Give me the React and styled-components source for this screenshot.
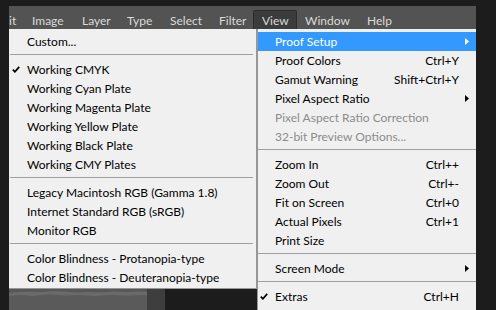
import React from "react";
import styled, { createGlobalStyle } from "styled-components";

const GlobalStyle = createGlobalStyle`
  html, body { margin: 0; padding: 0; background: #1c1c1c; }
  body { font-family: Lato, "Open Sans", sans-serif; font-size: 12px; }
  #root { width: 496px; height: 310px; overflow: hidden; }
`;

const Screen = styled.div`
  width: 496px;
  height: 310px;
  overflow: hidden;
  background: #1c1c1c;
  padding: 6px 0 0 9px;
  box-sizing: border-box;
  display: flex;
  flex-direction: column;
`;

const Column = styled.div`
  width: 467px;
  flex: 1;
  display: flex;
  flex-direction: column;
  min-height: 0;
`;

const MenuBar = styled.div`
  height: 23px;
  background: #535353;
  display: flex;
  align-items: flex-end;
  flex-shrink: 0;
`;

const BarItem = styled.div`
  width: ${(p) => p.$w}px;
  height: 19px;
  box-sizing: border-box;
  padding-left: ${(p) => (p.$first ? 0 : 8)}px;
  display: flex;
  align-items: center;
  color: #dadada;
  font-size: 12px;
  white-space: nowrap;
  overflow: hidden;
  background: ${(p) => (p.$active ? "#3c3c3c" : "transparent")};
  border: ${(p) => (p.$active ? "1px solid #2c2c2c" : "none")};
  border-bottom: none;
  border-radius: ${(p) => (p.$active ? "2px 2px 0 0" : "0")};
  padding-top: ${(p) => (p.$active ? 0 : 1)}px;
  margin-left: ${(p) => (p.$active ? -1 : 0)}px;
  ${(p) => (p.$active ? "padding-left: 8px; padding-top: 1px;" : "")}
`;

const Body = styled.div`
  flex: 1;
  display: flex;
  min-height: 0;
`;

const LeftArea = styled.div`
  width: 248px;
  display: flex;
  flex-direction: column;
`;

const Menu = styled.div`
  background: #f0f0f0;
  box-sizing: border-box;
  padding: ${(p) => (p.$sub ? "3px 0 1px" : "3px 0 0")};
  display: flex;
  flex-direction: column;
  ${(p) =>
    p.$sub
      ? "border-right: 1px solid #979797; border-bottom: 1px solid #979797;"
      : "border-left: 1px solid #979797; flex: 1;"}
  width: ${(p) => p.$w}px;
`;

const Row = styled.div`
  height: 19px;
  display: flex;
  align-items: center;
  position: relative;
  padding: 0 17px 0 ${(p) => p.$pl}px;
  background: ${(p) => (p.$hot ? "#3399ff" : "transparent")};
  color: ${(p) => (p.$hot ? "#ffffff" : p.$disabled ? "#8c8c8c" : "#000000")};
  white-space: nowrap;
  margin: ${(p) => (p.$hot ? "0 0 0 0" : "0")};
`;

const Label = styled.span`
  flex: 1;
`;

const Shortcut = styled.span`
  text-align: right;
`;

const CheckSlot = styled.span`
  position: absolute;
  left: ${(p) => p.$x}px;
  top: 6px;
  width: 8px;
  height: 7px;
  display: flex;
`;

const ArrowSlot = styled.span`
  position: absolute;
  right: 7px;
  top: 6px;
  width: 4px;
  height: 7px;
  display: flex;
`;

const Separator = styled.div`
  height: 9px;
  box-sizing: border-box;
  padding: 3px ${(p) => p.$r}px 0 ${(p) => p.$l}px;
  &::after {
    content: "";
    display: block;
    height: 1px;
    background: #a0a0a0;
  }
`;

const Canvas = styled.div`
  flex: 1;
  display: flex;
`;

const Check = () => (
  <svg width="8" height="7" viewBox="0 0 8 7">
    <path d="M0.8 3.6 L2.9 5.8 L7.2 0.9" fill="none" stroke="#000" strokeWidth="1.7" />
  </svg>
);

const Arrow = ({ color }) => (
  <svg width="4" height="7" viewBox="0 0 4 7">
    <polygon points="0,0 4,3.5 0,7" fill={color} />
  </svg>
);

const CanvasArt = () => (
  <svg width="248" height="22" viewBox="0 0 248 22">
    <rect x="0" y="0" width="156" height="22" fill="#575757" />
    <path
      d="M0 4 L10 3 L20 2.5 L32 3 L44 2 L56 2.5 L68 3.5 L80 3 L92 3.5 L104 2.5 L116 3 L128 2.5 L140 3 L146 4 L146 22 L0 22 Z"
      fill="#6a6a6a"
    />
    <path
      d="M0 7 L12 6 L24 7 L40 5.5 L56 6.5 L70 6 L86 7 L100 6 L118 6.5 L134 6 L146 7 L146 22 L0 22 Z"
      fill="#5a5a5a"
    />
    <rect x="138" y="0" width="18" height="22" fill="#3e3e3e" />
  </svg>
);

const barItems = [
  { t: "it", w: 15, first: true },
  { t: "Image", w: 50 },
  { t: "Layer", w: 45 },
  { t: "Type", w: 43 },
  { t: "Select", w: 49 },
  { t: "Filter", w: 43 },
  { t: "View", w: 44, active: true },
  { t: "Window", w: 62 },
  { t: "Help", w: 60 },
];

const leftMenu = [
  { t: "Custom..." },
  "sep",
  { t: "Working CMYK", check: true },
  { t: "Working Cyan Plate" },
  { t: "Working Magenta Plate" },
  { t: "Working Yellow Plate" },
  { t: "Working Black Plate" },
  { t: "Working CMY Plates" },
  "sep",
  { t: "Legacy Macintosh RGB (Gamma 1.8)" },
  { t: "Internet Standard RGB (sRGB)" },
  { t: "Monitor RGB" },
  "sep",
  { t: "Color Blindness - Protanopia-type" },
  { t: "Color Blindness - Deuteranopia-type" },
];

const rightMenu = [
  { t: "Proof Setup", hot: true, sub: true },
  { t: "Proof Colors", k: "Ctrl+Y" },
  { t: "Gamut Warning", k: "Shift+Ctrl+Y" },
  { t: "Pixel Aspect Ratio", sub: true },
  { t: "Pixel Aspect Ratio Correction", disabled: true },
  { t: "32-bit Preview Options...", disabled: true },
  "sep",
  { t: "Zoom In", k: "Ctrl++" },
  { t: "Zoom Out", k: "Ctrl+-" },
  { t: "Fit on Screen", k: "Ctrl+0" },
  { t: "Actual Pixels", k: "Ctrl+1" },
  { t: "Print Size" },
  "sep",
  { t: "Screen Mode", sub: true },
  "sep",
  { t: "Extras", k: "Ctrl+H", check: true },
];

function MenuList({ items, pl, checkX, sepL, sepR }) {
  return items.map((it, i) =>
    it === "sep" ? (
      <Separator key={i} $l={sepL} $r={sepR} />
    ) : (
      <Row key={i} $pl={pl} $hot={it.hot} $disabled={it.disabled}>
        {it.check && (
          <CheckSlot $x={checkX}>
            <Check />
          </CheckSlot>
        )}
        <Label>{it.t}</Label>
        {it.k && <Shortcut>{it.k}</Shortcut>}
        {it.sub && (
          <ArrowSlot>
            <Arrow color={it.hot ? "#ffffff" : "#000000"} />
          </ArrowSlot>
        )}
      </Row>
    )
  );
}

export default function App() {
  return (
    <>
      <GlobalStyle />
      <Screen>
        <Column>
          <MenuBar>
            {barItems.map((b) => (
              <BarItem key={b.t} $w={b.w} $first={b.first} $active={b.active}>
                {b.t}
              </BarItem>
            ))}
          </MenuBar>
          <Body>
            <LeftArea>
              <Menu $sub $w={248}>
                <MenuList items={leftMenu} pl={18} checkX={3} sepL={1} sepR={3} />
              </Menu>
              <Canvas>
                <CanvasArt />
              </Canvas>
            </LeftArea>
            <Menu $w={219}>
              <MenuList items={rightMenu} pl={17} checkX={2} sepL={0} sepR={0} />
            </Menu>
          </Body>
        </Column>
      </Screen>
    </>
  );
}
